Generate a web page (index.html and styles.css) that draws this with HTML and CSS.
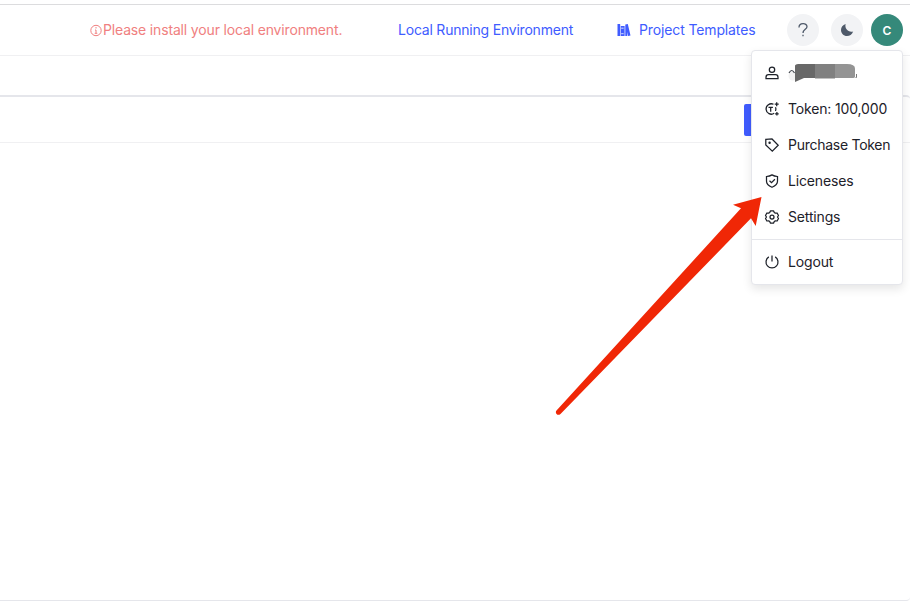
FILE: index.html
```html
<!DOCTYPE html>
<html lang="en">
<head>
<meta charset="utf-8">
<title>Workspace</title>
<link rel="stylesheet" href="styles.css">
</head>
<body>
<div class="app">
  <header class="header">
    <div class="notice">
      <svg width="13" height="13" viewBox="0 0 13 13" fill="none" stroke="currentColor"><circle cx="6" cy="6.500" r="5.200"/><path d="M6 3v1.500M5 6h1v3M4.700 9.300h2.600"/></svg>
      <span>Please install your local environment.</span>
    </div>
    <a class="link link-env">Local Running Environment</a>
    <a class="link link-templates">
      <svg width="14" height="14" viewBox="0 0 14 14" fill="currentColor"><path d="M.5 1h2.700v12H.5zM3.800 3h3.800v10H3.800zM8.300 1.400l2.500-.5 2.700 11.700-2.400.4L10.300 9v4h-2z"/><path d="M4.200 5.200h2.400M4.200 10.700h2.400" stroke="#fff" stroke-width=".8"/></svg>
      <span>Project Templates</span>
    </a>
    <button class="round help"><svg width="14" height="16" viewBox="0 0 14 16" fill="none" stroke="currentColor" stroke-width="1.300"><path d="M3 5.500c0-5 8-5 8-.8C11 7.300 7 7.500 7 11M7 12.700v1.500"/></svg></button>
    <button class="round theme"><svg width="14" height="14" viewBox="0 0 14 14" fill="currentColor"><path d="M5.600 1C4.500 5.500 8 9.600 13.200 8.500 12 11.500 9.700 13 7 13 3.500 13 1 10.300 1 7 1 4.200 2.800 1.900 5.600 1z"/></svg></button>
    <button class="round avatar">C</button>
  </header>
  <div class="tabs"></div>
  <main class="panel">
    <div class="toolbar"><button class="primary"></button></div>
  </main>
</div>

<div class="menu">
  <div class="item">
    <svg class="icon" viewBox="0 0 14 14"><circle cx="7" cy="3.700" r="2.700"/><path d="M1 12.600v-1.400c0-1.500 1-2.500 2.500-2.500h7c1.500 0 2.500 1 2.500 2.500v1.400z"/></svg>
    <svg class="redacted" width="72" height="24" viewBox="0 0 72 24"><circle cx="5" cy="15" r="4.500" fill="#f1f1f1"/><path d="M1 12q2.700-5 5.500 0" fill="none" stroke="#40444c" stroke-width="1.200"/><path d="M7 4.500q.5-1.500 3-1.500h17v14H16l-9 4z" fill="#686868"/><path d="M27 3h20v14.500H27z" fill="#808080"/><path d="M47 3h12q8 0 8 4.500v8q0 1.500-3 1.500H47z" fill="#949494"/><path d="M68.500 13v3.500h-1" fill="none" stroke="#777"/></svg>
  </div>
  <div class="item">
    <svg class="icon" viewBox="0 0 14 14"><path d="M8.500 2.300A5.200 5.200 0 1 0 9.200 11.300M10.500 5.200q.9 1.800 0 3.800"/><path d="M3.500 5.300h4.400M5.700 5.300v4.400"/><path d="M11.700.2v4M9.700 2.200h4M11.900 10v3.600M10.100 11.800h3.600"/></svg>
    <span>Token: 100,000</span>
  </div>
  <div class="item">
    <svg class="icon" viewBox="0 0 14 14"><path d="M.8 1.400 7 1l6.200 6.300-5.900 5.900L.8 7z"/><circle cx="4.600" cy="4.700" r=".6"/></svg>
    <span class="purchase">Purchase Token</span>
  </div>
  <div class="item">
    <svg class="icon" viewBox="0 0 14 14"><path d="M7 .9c1.600 1 3.500 1.500 5.500 1.600v4.700c0 2.600-2.500 4.700-5.500 6-3-1.300-5.500-3.400-5.500-6V2.500C3.500 2.400 5.400 1.900 7 .9z"/><path d="m4.500 6.700 2 1.900 3.400-3.300"/></svg>
    <span>Liceneses</span>
  </div>
  <div class="item">
    <svg class="icon" viewBox="0 0 14 14"><path d="M5.500.9h3l.8 1.600 1 .6 1.800-.1 1.400 2.500-1 1.500 1 1.500-1.400 2.500-1.800-.1-1 .6-.8 1.600h-3l-.8-1.600-1-.6-1.800.1L.5 8.500l1-1.500-1-1.500L1.900 3l1.800.1 1-.6z" stroke-linejoin="round"/><circle cx="7" cy="7" r="2"/></svg>
    <span>Settings</span>
  </div>
  <div class="divider"></div>
  <div class="item">
    <svg class="icon" viewBox="0 0 14 14"><path d="M3.800 1.900a6 6 0 1 0 6.400 0M7 .5v6"/></svg>
    <span>Logout</span>
  </div>
</div>

<svg class="arrow" width="220" height="230" viewBox="550 190 220 230"><path d="M761.500 197 733 204.700 741 208.300 556.500 410.500C554.500 413 557.500 416.500 560.500 414L751 218.300 755.700 226z" fill="#f02706"/></svg>
</body>
</html>
```

FILE: styles.css
```css
* { box-sizing: border-box; }
body {
  margin: 0;
  background: #fff;
  font-family: Inter, "Liberation Sans", sans-serif;
  font-size: 14px;
  font-weight: 375;
  line-height: 22px;
  letter-spacing: -.16px;
  color: #1d2129;
  overflow: hidden;
}
svg { display: block; flex: none; }
.app { height: 608px; padding-top: 4px; display: flex; flex-direction: column; }
.header {
  height: 52px;
  flex: none;
  display: flex;
  align-items: center;
  padding-right: 7px;
  border-top: 1px solid #dcdcde;
  border-bottom: 1px solid #f0f0f2;
}
.notice { display: flex; align-items: center; width: 308px; margin-left: 90px; color: #f08080; white-space: nowrap; }
.link { color: #405cff; white-space: nowrap; }
.link-env { width: 219px; letter-spacing: -.21px; }
.link-templates { display: flex; align-items: center; gap: 8px; width: 170px; letter-spacing: -.13px; }
.round {
  display: flex;
  align-items: center;
  justify-content: center;
  flex: none;
  width: 32px;
  height: 32px;
  padding: 0;
  border: 0;
  border-radius: 50%;
  background: #f2f3f5;
  color: #4e5969;
}
.theme { margin-left: 12px; }
.avatar { margin-left: 8px; background: #35897a; color: #fff; font: 600 12px Inter, sans-serif; }
.tabs { height: 39px; flex: none; }
.panel { height: 506px; border-top: 2px solid #e5e6eb; border-bottom: 1px solid #e5e6eb; border-radius: 0 4px 4px 0; }
.toolbar { height: 46px; padding: 7px 0 0 744px; border-bottom: 1px solid #f0f0f2; }
.primary { display: block; width: 90px; height: 32px; border: 0; border-radius: 2px; background: #405cff; }
.menu {
  position: absolute;
  left: 751px;
  top: 50px;
  width: 152px;
  height: 235px;
  padding: 4px 0;
  border: 1px solid #e5e6eb;
  border-radius: 4px;
  background: #fff;
  box-shadow: 0 4px 10px rgba(0, 0, 0, .1);
}
.item { display: flex; align-items: center; height: 36px; padding-left: 13px; gap: 9px; white-space: nowrap; }
.purchase { letter-spacing: -.27px; }
.icon { width: 14px; height: 14px; fill: none; stroke: #1d2129; stroke-width: 1.25; overflow: visible; }
.divider { height: 1px; margin: 4px 0; background: #e5e6eb; }
.arrow { position: absolute; left: 550px; top: 190px; }
```
